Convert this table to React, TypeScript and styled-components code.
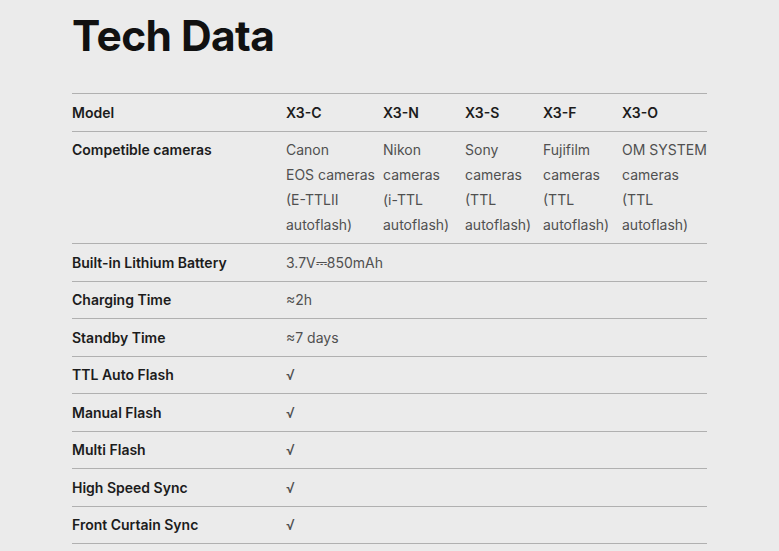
import React from "react";
import styled, { createGlobalStyle } from "styled-components";

const Global = createGlobalStyle`
  html, body { margin: 0; padding: 0; background: #ebebeb; }
  body { font-family: "Inter", "Liberation Sans", sans-serif; color: #1a1a1a; }
`;

const Page = styled.div`
  width: 779px;
  height: 551px;
  overflow: hidden;
  box-sizing: border-box;
  padding: 10px 72px 0 72px;
`;

const Title = styled.h1`
  margin: 0 0 31px 0;
  font-size: 42.5px;
  line-height: 52px;
  font-weight: 700;
  letter-spacing: -0.6px;
  color: #111;
`;

const Table = styled.div`
  width: 635px;
  border-top: 1px solid #b0b0b0;
`;

const Row = styled.div`
  display: grid;
  grid-template-columns: 214px 97px 82px 78px 79px 85px;
  border-bottom: 1px solid #b0b0b0;
  padding: 5.5px 0 6px;
  line-height: 25px;
  font-size: 14px;
`;

const Label = styled.div`
  font-weight: 600;
  color: #1c1c1c;
`;

const Head = styled.div`
  font-weight: 600;
  color: #1c1c1c;
`;

const Cell = styled.div<{ $span?: boolean }>`
  color: #505050;
  grid-column: ${(p) => (p.$span ? "2 / 7" : "auto")};
  white-space: pre-line;
`;

const models = ["X3-C", "X3-N", "X3-S", "X3-F", "X3-O"];
const cams = [
  "Canon\nEOS cameras\n(E-TTLII\nautoflash)",
  "Nikon\ncameras\n(i-TTL\nautoflash)",
  "Sony\ncameras\n(TTL\nautoflash)",
  "Fujifilm\ncameras\n(TTL\nautoflash)",
  "OM SYSTEM\ncameras\n(TTL\nautoflash)",
];

const rows: [string, string][] = [
  ["Built-in Lithium Battery", "3.7V⎓850mAh"],
  ["Charging Time", "≈2h"],
  ["Standby Time", "≈7 days"],
  ["TTL Auto Flash", "√"],
  ["Manual Flash", "√"],
  ["Multi Flash", "√"],
  ["High Speed Sync", "√"],
  ["Front Curtain Sync", "√"],
];

export default function App() {
  return (
    <Page>
      <Global />
      <Title>Tech Data</Title>
      <Table>
        <Row>
          <Label>Model</Label>
          {models.map((m) => (
            <Head key={m}>{m}</Head>
          ))}
        </Row>
        <Row>
          <Label>Competible cameras</Label>
          {cams.map((c, i) => (
            <Cell key={i}>{c}</Cell>
          ))}
        </Row>
        {rows.map(([l, v]) => (
          <Row key={l}>
            <Label>{l}</Label>
            <Cell $span>{v}</Cell>
          </Row>
        ))}
      </Table>
    </Page>
  );
}
